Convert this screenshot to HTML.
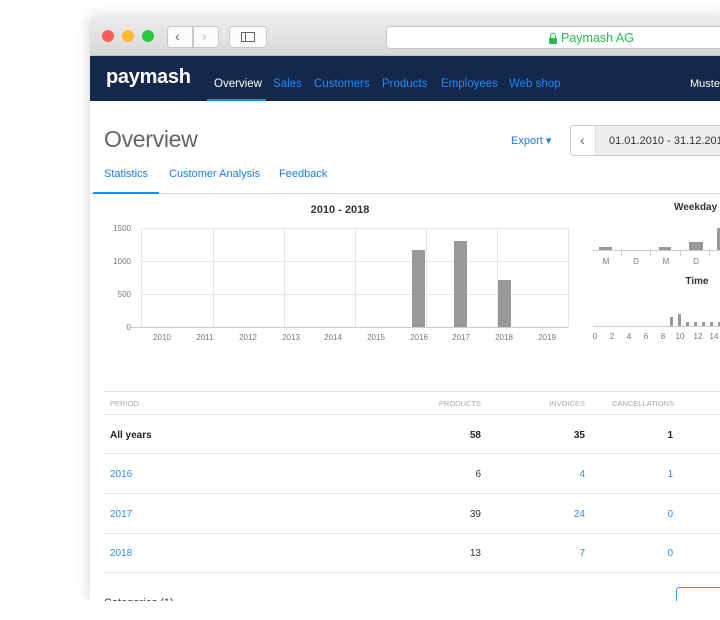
<!DOCTYPE html>
<html><head><meta charset="utf-8"><style>
*{margin:0;padding:0;box-sizing:border-box}
body{width:720px;height:620px;background:#fff;position:relative;overflow:hidden;font-family:"Liberation Sans",Helvetica,Arial,sans-serif}
.win{position:absolute;left:90px;top:17px;width:640px;height:584px;background:#fff;box-shadow:0 0 14px rgba(0,0,0,.18);overflow:hidden;border-radius:5px 0 0 0}
.tb{position:absolute;left:0;top:0;width:100%;height:39px;background:linear-gradient(#ececec,#d8d8d8);border-bottom:1px solid #c0c0c0}
.dot{position:absolute;top:13px;width:12px;height:12px;border-radius:50%}
.btn{position:absolute;top:9px;height:22px;background:#fbfbfb;border:1px solid #c8c8c8;border-radius:4px}
.nav{position:absolute;left:0;top:39px;width:100%;height:45px;background:#13284a}
.nav span{position:absolute;top:22px;font-size:11.5px;color:#1a8cff}
.a{position:absolute;white-space:nowrap}
</style></head><body>
<div class="win">
 <div class="tb">
  <div class="dot" style="left:12px;background:#fc5f57"></div>
  <div class="dot" style="left:32px;background:#fdbb2e"></div>
  <div class="dot" style="left:52px;background:#29c840"></div>
  <div class="btn" style="left:77px;width:26px;border-radius:4px 0 0 4px"></div>
  <div class="btn" style="left:103px;width:26px;border-radius:0 4px 4px 0"></div>
  <div class="a" style="left:85px;top:11px;font-size:14px;color:#666">&#8249;</div>
  <div class="a" style="left:112px;top:11px;font-size:14px;color:#bbb">&#8250;</div>
  <div class="btn" style="left:139px;width:38px"></div>
  <div class="a" style="left:151px;top:15px;width:14px;height:10px;border:1px solid #666"></div>
  <div class="a" style="left:155px;top:15px;width:1px;height:10px;background:#666"></div>
  <div class="btn" style="left:296px;width:360px;height:23px;background:#fff"></div>
  <div class="a" style="left:459px;top:21px;width:8px;height:6px;background:#1fbf4f;border-radius:1px"></div>
  <div class="a" style="left:460px;top:16px;width:6px;height:7px;border:1.5px solid #1fbf4f;border-bottom:none;border-radius:3px 3px 0 0"></div>
  <div class="a" style="left:471px;top:14px;font-size:12.5px;color:#1fbf4f">Paymash AG</div>
 </div>
 <div class="nav">
  <div class="a" style="left:16px;top:10px;font-size:20px;font-weight:bold;color:#fff;letter-spacing:-.3px">paymash</div>
  <span style="left:124px;color:#fff">Overview</span>
  <div class="a" style="left:117px;top:43px;width:59px;height:2px;background:#1a8cff"></div>
  <span style="left:183px">Sales</span>
  <span style="left:224px">Customers</span>
  <span style="left:292px">Products</span>
  <span style="left:351px">Employees</span>
  <span style="left:419px">Web shop</span>
  <span style="left:600px;color:#fff;font-size:11px">Muster</span>
 </div>
 <div class="a" style="left:14px;top:109px;font-size:23px;color:#666;letter-spacing:-.3px">Overview</div>
 <div class="a" style="left:421px;top:117px;font-size:11px;color:#1a7ee6">Export &#9662;</div>
 <div class="a" style="left:480px;top:108px;width:170px;height:31px;border:1px solid #ccc;border-radius:3px;overflow:hidden">
  <div style="position:absolute;left:24px;top:0;width:150px;height:31px;background:#eee;border-left:1px solid #ddd"></div>
  <div style="position:absolute;left:9px;top:6px;font-size:14px;color:#666">&#8249;</div>
  <div style="position:absolute;left:38px;top:9px;font-size:11px;color:#333">01.01.2010 - 31.12.2018</div>
 </div>
 <div class="a" style="left:14px;top:151px;font-size:11px;color:#1a7ee6">Statistics</div>
 <div class="a" style="left:79px;top:151px;font-size:11px;color:#1a7ee6">Customer Analysis</div>
 <div class="a" style="left:189px;top:151px;font-size:11px;color:#1a7ee6">Feedback</div>
 <div class="a" style="left:0;top:176px;width:640px;height:1px;background:#ddd"></div>
 <div class="a" style="left:3px;top:175px;width:66px;height:2px;background:#1a8cff"></div>
</div>
<svg class="a" style="left:0;top:0;position:absolute" width="720" height="620">
 <g font-family="Liberation Sans,sans-serif">
 <text x="340" y="213" font-size="11" font-weight="bold" fill="#333" text-anchor="middle">2010 - 2018</text>
 <g stroke="#e6e6e6" stroke-width="1">
  <line x1="141" y1="228.5" x2="568" y2="228.5"/><line x1="141" y1="261.5" x2="568" y2="261.5"/><line x1="141" y1="294.5" x2="568" y2="294.5"/>
  <line x1="141.5" y1="228" x2="141.5" y2="327"/><line x1="213.5" y1="228" x2="213.5" y2="327"/><line x1="284.5" y1="228" x2="284.5" y2="327"/><line x1="355.5" y1="228" x2="355.5" y2="327"/><line x1="426.5" y1="228" x2="426.5" y2="327"/><line x1="497.5" y1="228" x2="497.5" y2="327"/><line x1="568.5" y1="228" x2="568.5" y2="327"/>
 </g>
 <line x1="131" y1="327.5" x2="568" y2="327.5" stroke="#ccc"/>
 <g fill="#999"><rect x="412" y="250" width="13" height="77"/><rect x="454" y="241" width="13" height="86"/><rect x="498" y="280" width="13" height="47"/></g>
 <g font-size="8" fill="#777" text-anchor="end"><text x="131" y="231">1500</text><text x="131" y="264">1000</text><text x="131" y="297">500</text><text x="131" y="330">0</text></g>
 <g font-size="8" fill="#777" text-anchor="middle"><text x="162" y="340">2010</text><text x="205" y="340">2011</text><text x="248" y="340">2012</text><text x="291" y="340">2013</text><text x="333" y="340">2014</text><text x="376" y="340">2015</text><text x="419" y="340">2016</text><text x="461" y="340">2017</text><text x="504" y="340">2018</text><text x="547" y="340">2019</text></g>
 <text x="674" y="210" font-size="10" font-weight="bold" fill="#333">Weekday</text>
 <line x1="593" y1="250.5" x2="720" y2="250.5" stroke="#ccc"/>
 <g fill="#999"><rect x="599" y="247" width="13" height="3"/><rect x="659" y="247" width="12" height="3"/><rect x="689" y="242" width="14" height="8"/><rect x="717" y="228" width="5" height="22"/></g>
 <g stroke="#ccc"><line x1="621.5" y1="250" x2="621.5" y2="256"/><line x1="650.5" y1="250" x2="650.5" y2="256"/><line x1="680.5" y1="250" x2="680.5" y2="256"/><line x1="709.5" y1="250" x2="709.5" y2="256"/></g>
 <g font-size="8" fill="#777" text-anchor="middle"><text x="606" y="264">M</text><text x="636" y="264">D</text><text x="666" y="264">M</text><text x="696" y="264">D</text></g>
 <text x="697" y="284" font-size="10" font-weight="bold" fill="#333" text-anchor="middle">Time</text>
 <line x1="593" y1="326.5" x2="720" y2="326.5" stroke="#ccc"/>
 <g fill="#999"><rect x="670" y="317" width="3" height="9"/><rect x="678" y="314" width="3" height="12"/><rect x="686" y="322" width="3" height="4"/><rect x="694" y="322" width="3" height="4"/><rect x="702" y="322" width="3" height="4"/><rect x="710" y="322" width="3" height="4"/><rect x="718" y="322" width="3" height="4"/></g>
 <g font-size="8" fill="#777" text-anchor="middle"><text x="595" y="339">0</text><text x="612" y="339">2</text><text x="629" y="339">4</text><text x="646" y="339">6</text><text x="663" y="339">8</text><text x="680" y="339">10</text><text x="698" y="339">12</text><text x="714" y="339">14</text></g>
 <g stroke="#e4e4e4"><line x1="104" y1="391.5" x2="720" y2="391.5"/><line x1="104" y1="414.5" x2="720" y2="414.5"/><line x1="104" y1="453.5" x2="720" y2="453.5"/><line x1="104" y1="493.5" x2="720" y2="493.5"/><line x1="104" y1="533.5" x2="720" y2="533.5"/><line x1="104" y1="572.5" x2="720" y2="572.5"/></g>
 <g font-size="7.5" fill="#aaa"><text x="110" y="406">PERIOD</text><text x="481" y="406" text-anchor="end">PRODUCTS</text><text x="585" y="406" text-anchor="end">INVOICES</text><text x="674" y="406" text-anchor="end">CANCELLATIONS</text></g>
 <g font-size="10"><text x="110" y="438" font-weight="bold" fill="#222">All years</text><text x="481" y="438" text-anchor="end" font-weight="bold" fill="#222">58</text><text x="585" y="438" text-anchor="end" font-weight="bold" fill="#222">35</text><text x="673" y="438" text-anchor="end" font-weight="bold" fill="#222">1</text>
 <text x="110" y="477" fill="#2a8fe6">2016</text><text x="481" y="477" text-anchor="end" fill="#333">6</text><text x="585" y="477" text-anchor="end" fill="#2a8fe6">4</text><text x="673" y="477" text-anchor="end" fill="#2a8fe6">1</text>
 <text x="110" y="517" fill="#2a8fe6">2017</text><text x="481" y="517" text-anchor="end" fill="#333">39</text><text x="585" y="517" text-anchor="end" fill="#2a8fe6">24</text><text x="673" y="517" text-anchor="end" fill="#2a8fe6">0</text>
 <text x="110" y="556" fill="#2a8fe6">2018</text><text x="481" y="556" text-anchor="end" fill="#333">13</text><text x="585" y="556" text-anchor="end" fill="#2a8fe6">7</text><text x="673" y="556" text-anchor="end" fill="#2a8fe6">0</text></g>
 <rect x="676.5" y="587.5" width="50" height="20" rx="3" fill="none" stroke="#3a8ee6"/>
 <text x="104" y="606" font-size="11" fill="#333">Categories (1)</text>
 </g>
 <rect x="0" y="601" width="720" height="19" fill="#fff"/>
</svg>
</body></html>
